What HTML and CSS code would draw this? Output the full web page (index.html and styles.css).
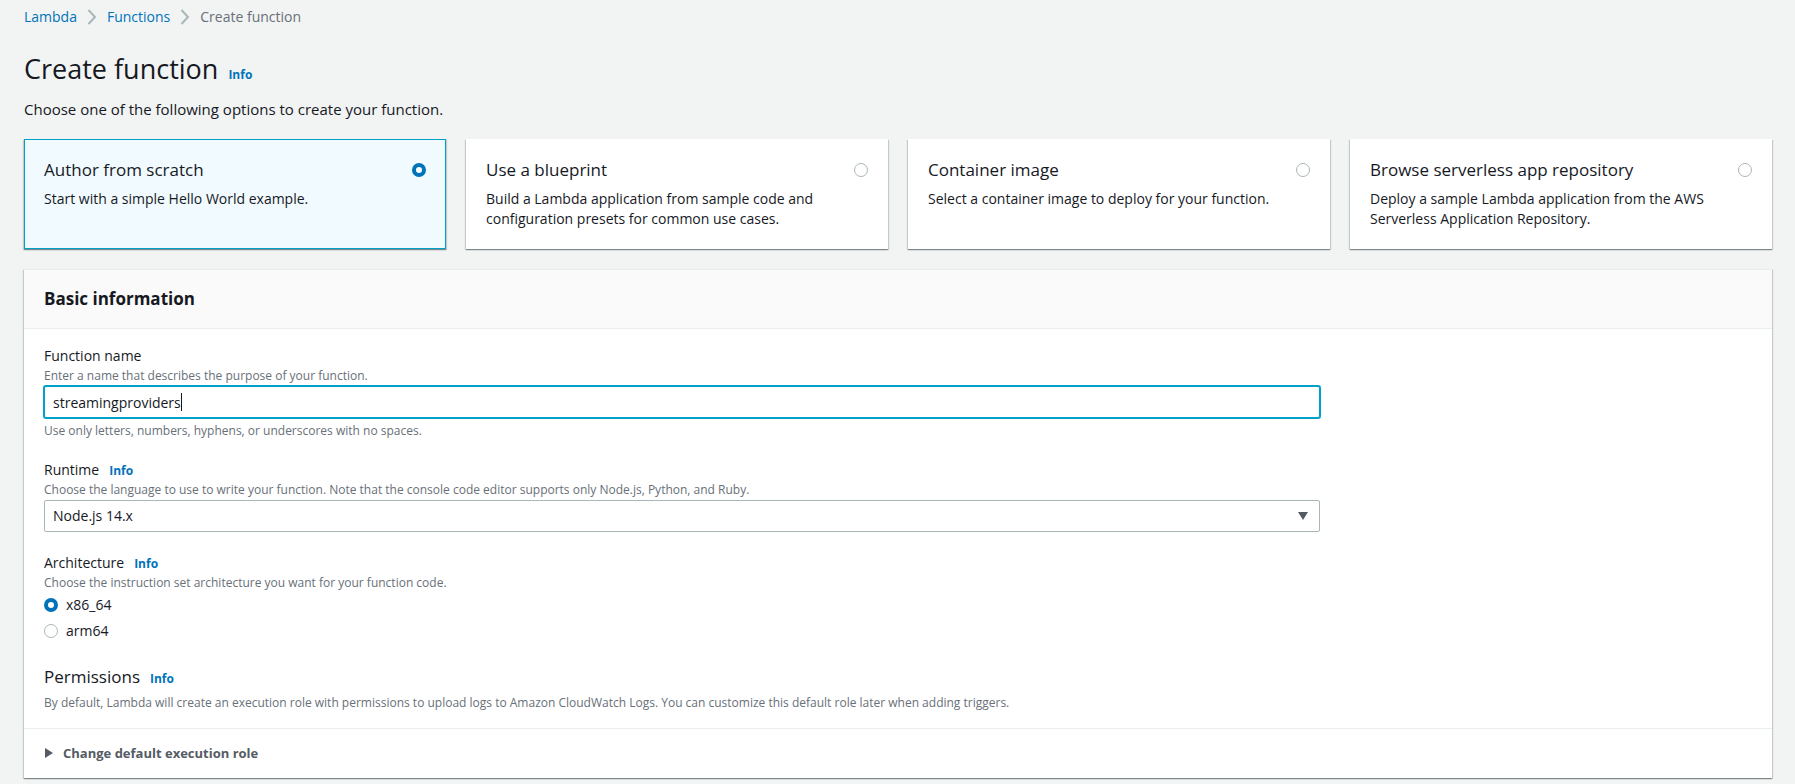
FILE: index.html
```html
<!DOCTYPE html>
<html lang="en">
<head>
<meta charset="utf-8">
<title>Create function</title>
<link rel="stylesheet" href="styles.css">
</head>
<body>
<nav class="breadcrumbs" aria-label="Breadcrumbs">
  <a href="#">Lambda</a>
  <svg class="chevron" viewBox="0 0 10 16" aria-hidden="true"><path d="M1.500 1 8 8l-6.500 7"/></svg>
  <a href="#">Functions</a>
  <svg class="chevron" viewBox="0 0 10 16" aria-hidden="true"><path d="M1.500 1 8 8l-6.500 7"/></svg>
  <span>Create function</span>
</nav>
<main>
  <header class="page-header">
    <div class="heading"><h1>Create function</h1><a class="info" href="#">Info</a></div>
    <p>Choose one of the following options to create your function.</p>
  </header>
  <div class="tiles" role="radiogroup" aria-label="Creation method">
    <label class="tile">
      <span class="tile-top"><span class="tile-title">Author from scratch</span><input class="radio" type="radio" name="method" checked></span>
      <span class="tile-text">Start with a simple Hello World example.</span>
    </label>
    <label class="tile">
      <span class="tile-top"><span class="tile-title">Use a blueprint</span><input class="radio" type="radio" name="method"></span>
      <span class="tile-text">Build a Lambda application from sample code and configuration presets for common use cases.</span>
    </label>
    <label class="tile">
      <span class="tile-top"><span class="tile-title">Container image</span><input class="radio" type="radio" name="method"></span>
      <span class="tile-text">Select a container image to deploy for your function.</span>
    </label>
    <label class="tile">
      <span class="tile-top"><span class="tile-title">Browse serverless app repository</span><input class="radio" type="radio" name="method"></span>
      <span class="tile-text">Deploy a sample Lambda application from the AWS Serverless Application Repository.</span>
    </label>
  </div>
  <section class="panel">
    <div class="panel-header"><h2>Basic information</h2></div>
    <form class="panel-body">
      <div class="field">
        <label class="label" for="name">Function name</label>
        <p class="hint">Enter a name that describes the purpose of your function.</p>
        <div class="text-box">
          <input class="control" id="name" type="text" value="streamingproviders" spellcheck="false" autofocus>
          <span class="caret" aria-hidden="true"></span>
        </div>
        <p class="hint constraint">Use only letters, numbers, hyphens, or underscores with no spaces.</p>
      </div>
      <div class="field">
        <div class="label-row"><label class="label" for="runtime">Runtime</label><a class="info" href="#">Info</a></div>
        <p class="hint">Choose the language to use to write your function. Note that the console code editor supports only Node.js, Python, and Ruby.</p>
        <div class="select">
          <select class="control" id="runtime"><option>Node.js 14.x</option></select>
          <svg class="arrow" viewBox="0 0 10 8" aria-hidden="true"><path d="M0 0h10L5 8z"/></svg>
        </div>
      </div>
      <div class="field" role="radiogroup" aria-labelledby="arch">
        <div class="label-row"><span class="label" id="arch">Architecture</span><a class="info" href="#">Info</a></div>
        <p class="hint">Choose the instruction set architecture you want for your function code.</p>
        <div class="options">
          <label class="option"><input class="radio" type="radio" name="arch" checked>x86_64</label>
          <label class="option"><input class="radio" type="radio" name="arch">arm64</label>
        </div>
      </div>
      <div class="permissions">
        <div class="heading"><h3>Permissions</h3><a class="info" href="#">Info</a></div>
        <p class="hint">By default, Lambda will create an execution role with permissions to upload logs to Amazon CloudWatch Logs. You can customize this default role later when adding triggers.</p>
      </div>
    </form>
    <button class="expander" type="button" aria-expanded="false">
      <svg class="triangle" viewBox="0 0 9 10" aria-hidden="true"><path d="M1 0l8 5-8 5z"/></svg>
      Change default execution role
    </button>
  </section>
</main>
</body>
</html>
```
FILE: styles.css
```css
* {
  box-sizing: border-box;
}

body {
  margin: 0;
  padding: 7px 23px 5px 24px;
  background: #f2f3f3;
  color: #16191f;
  font: 14px/20px "Open Sans", "Noto Sans", sans-serif;
}

h1, h2, h3, p {
  margin: 0;
}

a {
  color: #0073bb;
  text-decoration: none;
}

.breadcrumbs {
  display: flex;
  align-items: center;
  gap: 10px;
  color: #687078;
}

.chevron {
  width: 10px;
  height: 16px;
  fill: none;
  stroke: #aab7b8;
  stroke-width: 2;
}

.page-header {
  padding: 24px 0 18px;
}

.page-header p {
  margin-top: 10px;
  font-size: 15px;
  line-height: 24px;
}

.heading {
  display: flex;
  align-items: baseline;
  gap: 10px;
}

h1 {
  font-size: 27px;
  line-height: 36px;
  font-weight: 400;
}

.info {
  font-size: 12px;
  line-height: 16px;
  font-weight: 700;
}

.tiles {
  display: grid;
  grid-template-columns: repeat(4, 1fr);
  gap: 20px;
}

.tile {
  display: block;
  min-height: 110px;
  padding: 19px;
  border: 1px solid transparent;
  background: #fff;
  box-shadow: 0 1px 1px 0 rgba(0, 28, 36, .3), 1px 1px 1px 0 rgba(0, 28, 36, .15), -1px 1px 1px 0 rgba(0, 28, 36, .15);
}

.tile:has(:checked) {
  border-color: #00a1c9;
  background: #f1faff;
}

.tile-top {
  display: flex;
  align-items: center;
  justify-content: space-between;
  margin-bottom: 8px;
}

.tile-title {
  font-size: 17px;
  line-height: 22px;
}

.tile-text {
  display: block;
  max-width: 350px;
}

.radio {
  appearance: none;
  flex: none;
  width: 14px;
  height: 14px;
  margin: 0;
  border: 1px solid #aab7b8;
  border-radius: 50%;
  background: #fff;
}

.radio:checked {
  border: 4px solid #0073bb;
}

.panel {
  margin-top: 20px;
  background: #fff;
  box-shadow: 0 1px 1px 0 rgba(0, 28, 36, .3), 1px 1px 1px 0 rgba(0, 28, 36, .15), -1px 1px 1px 0 rgba(0, 28, 36, .15);
}

.panel-header {
  padding: 18px 20px;
  border-top: 1px solid #eaeded;
  border-bottom: 1px solid #eaeded;
  background: #fafafa;
}

h2, h3 {
  font-size: 17px;
  line-height: 22px;
}

h3 {
  font-weight: 400;
}

.panel-body {
  padding: 17px 20px 15px;
}

.field {
  width: calc(75% - 5px);
  margin-bottom: 21px;
}

.label {
  display: block;
}

.label-row {
  display: flex;
  align-items: baseline;
  gap: 10px;
}

.hint {
  color: #687078;
  font-size: 12px;
  line-height: 20px;
}

.control {
  appearance: none;
  display: block;
  width: 100%;
  height: 32px;
  padding: 0 8px;
  border: 1px solid #aab7b8;
  border-radius: 2px;
  background: #fff;
  color: inherit;
  font: inherit;
}

.text-box {
  position: relative;
}

.text-box .control {
  border-color: #00a1c9;
  outline: 0;
  box-shadow: 0 0 0 1px #00a1c9;
  caret-color: transparent;
}

.caret {
  position: absolute;
  top: 7px;
  left: 137px;
  width: 1px;
  height: 18px;
  background: #16191f;
}

.constraint {
  margin-top: 5px;
  line-height: 16px;
}

.select {
  position: relative;
}

.arrow {
  position: absolute;
  top: 12px;
  right: 12px;
  width: 10px;
  height: 8px;
  fill: #545b64;
}

.options {
  display: grid;
  gap: 6px;
  margin-top: 2px;
}

.option {
  display: flex;
  align-items: center;
  gap: 8px;
}

.permissions {
  padding-top: 4px;
}

.permissions .hint {
  margin-top: 5px;
}

.expander {
  display: flex;
  align-items: center;
  gap: 10px;
  width: 100%;
  padding: 14px 20px 15px;
  border: 0;
  border-top: 1px solid #eaeded;
  background: none;
  color: #545b64;
  font: inherit;
  font-size: 13px;
  font-weight: 700;
  text-align: left;
}

.triangle {
  width: 9px;
  height: 10px;
  fill: #545b64;
}
```
